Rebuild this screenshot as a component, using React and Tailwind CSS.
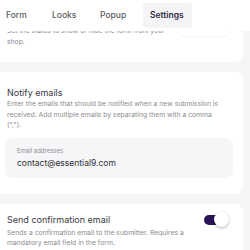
import React, { useState } from "react";

const tabs = [
  { name: "Form", w: "w-[46px]" },
  { name: "Looks", w: "w-[48px]" },
  { name: "Popup", w: "w-[49px]" },
  { name: "Settings", w: "w-[49px]" },
];

const Toggle = ({ on, onChange }) => (
  <button
    onClick={() => onChange(!on)}
    className="relative flex items-center w-[25px] h-[16px] shrink-0"
  >
    <span
      className={`h-[10px] w-[18px] rounded-full ${on ? "bg-[#2a1257]" : "bg-gray-300"}`}
    />
    <span
      className={`absolute top-0 h-[15px] w-[15px] rounded-full bg-white shadow-[0_1px_3px_rgba(0,0,0,0.3)] ${on ? "left-[10px]" : "left-0"}`}
    />
  </button>
);

const App = () => {
  const [active, setActive] = useState("Settings");
  const [confirm, setConfirm] = useState(true);

  return (
    <div className="w-[250px] h-[250px] overflow-hidden bg-[#f6f6f8] font-['Inter',sans-serif] flex flex-col">
      {/* Tabs */}
      <div className="h-[31px] shrink-0 bg-white flex items-center pb-[1px]">
        {tabs.map((t) => (
          <button
            key={t.name}
            onClick={() => setActive(t.name)}
            className={`${t.w} h-[25px] rounded-[4px] text-[8.5px] leading-none text-left ${
              active === t.name
                ? "bg-[#f4f4f7] text-[#2e2a40] font-semibold pl-[7px]"
                : "text-[#5a5a60] font-medium pl-[6px]"
            }`}
          >
            {t.name}
          </button>
        ))}
      </div>

      {/* Content */}
      <div className="flex-1 overflow-hidden">
        <div className="flex flex-col gap-[10px] -mt-[5px] pr-[7px]">
          {/* Status card (scrolled under tabs) */}
          <div className="bg-white rounded-r-[8px] pl-[7px] pr-[13px] pb-[15px] flex justify-between">
            <p className="text-[6.8px] leading-[10.5px] text-[#8b8b91] w-[160px]">
              Set the status to show or hide the form from your shop.
            </p>
            <div className="-mt-[4px] w-[52px] h-[14px] rounded-[5px] bg-white shadow-[0_0_2px_rgba(0,0,0,0.12)]" />
          </div>

          {/* Notify emails */}
          <div className="bg-white rounded-r-[8px] pl-[7px] pr-[10px] pt-[14px] pb-[16px]">
            <h2 className="text-[9px] leading-[13px] text-[#38383f]">
              Notify emails
            </h2>
            <p className="text-[6.8px] leading-[10.5px] text-[#8b8b91] w-[214px]">
              Enter the emails that should be notified when a new submission is
              received. Add multiple emails by separating them with a comma
              (",").
            </p>
            <div className="mt-[7px] -ml-[2px] h-[40px] rounded-[8px] bg-[#f6f6f8] pl-[12px] flex flex-col justify-center gap-[2px]">
              <span className="text-[6px] leading-[8px] text-[#8b8b91]">
                Email addresses
              </span>
              <span className="text-[8.5px] leading-[12px] text-[#2f2f36]">
                contact@essential9.com
              </span>
            </div>
          </div>

          {/* Send confirmation */}
          <div className="bg-white rounded-r-[8px] pl-[7px] pr-[14px] pt-[8px] pb-[16px]">
            <div className="flex items-center justify-between h-[16px]">
              <h2 className="text-[9px] leading-[13px] text-[#38383f]">
                Send confirmation email
              </h2>
              <Toggle on={confirm} onChange={setConfirm} />
            </div>
            <p className="text-[6.8px] leading-[10.5px] text-[#8b8b91] w-[200px]">
              Sends a confirmation email to the submitter. Requires a mandatory
              email field in the form.
            </p>
          </div>
        </div>
      </div>
    </div>
  );
};

export default App;
